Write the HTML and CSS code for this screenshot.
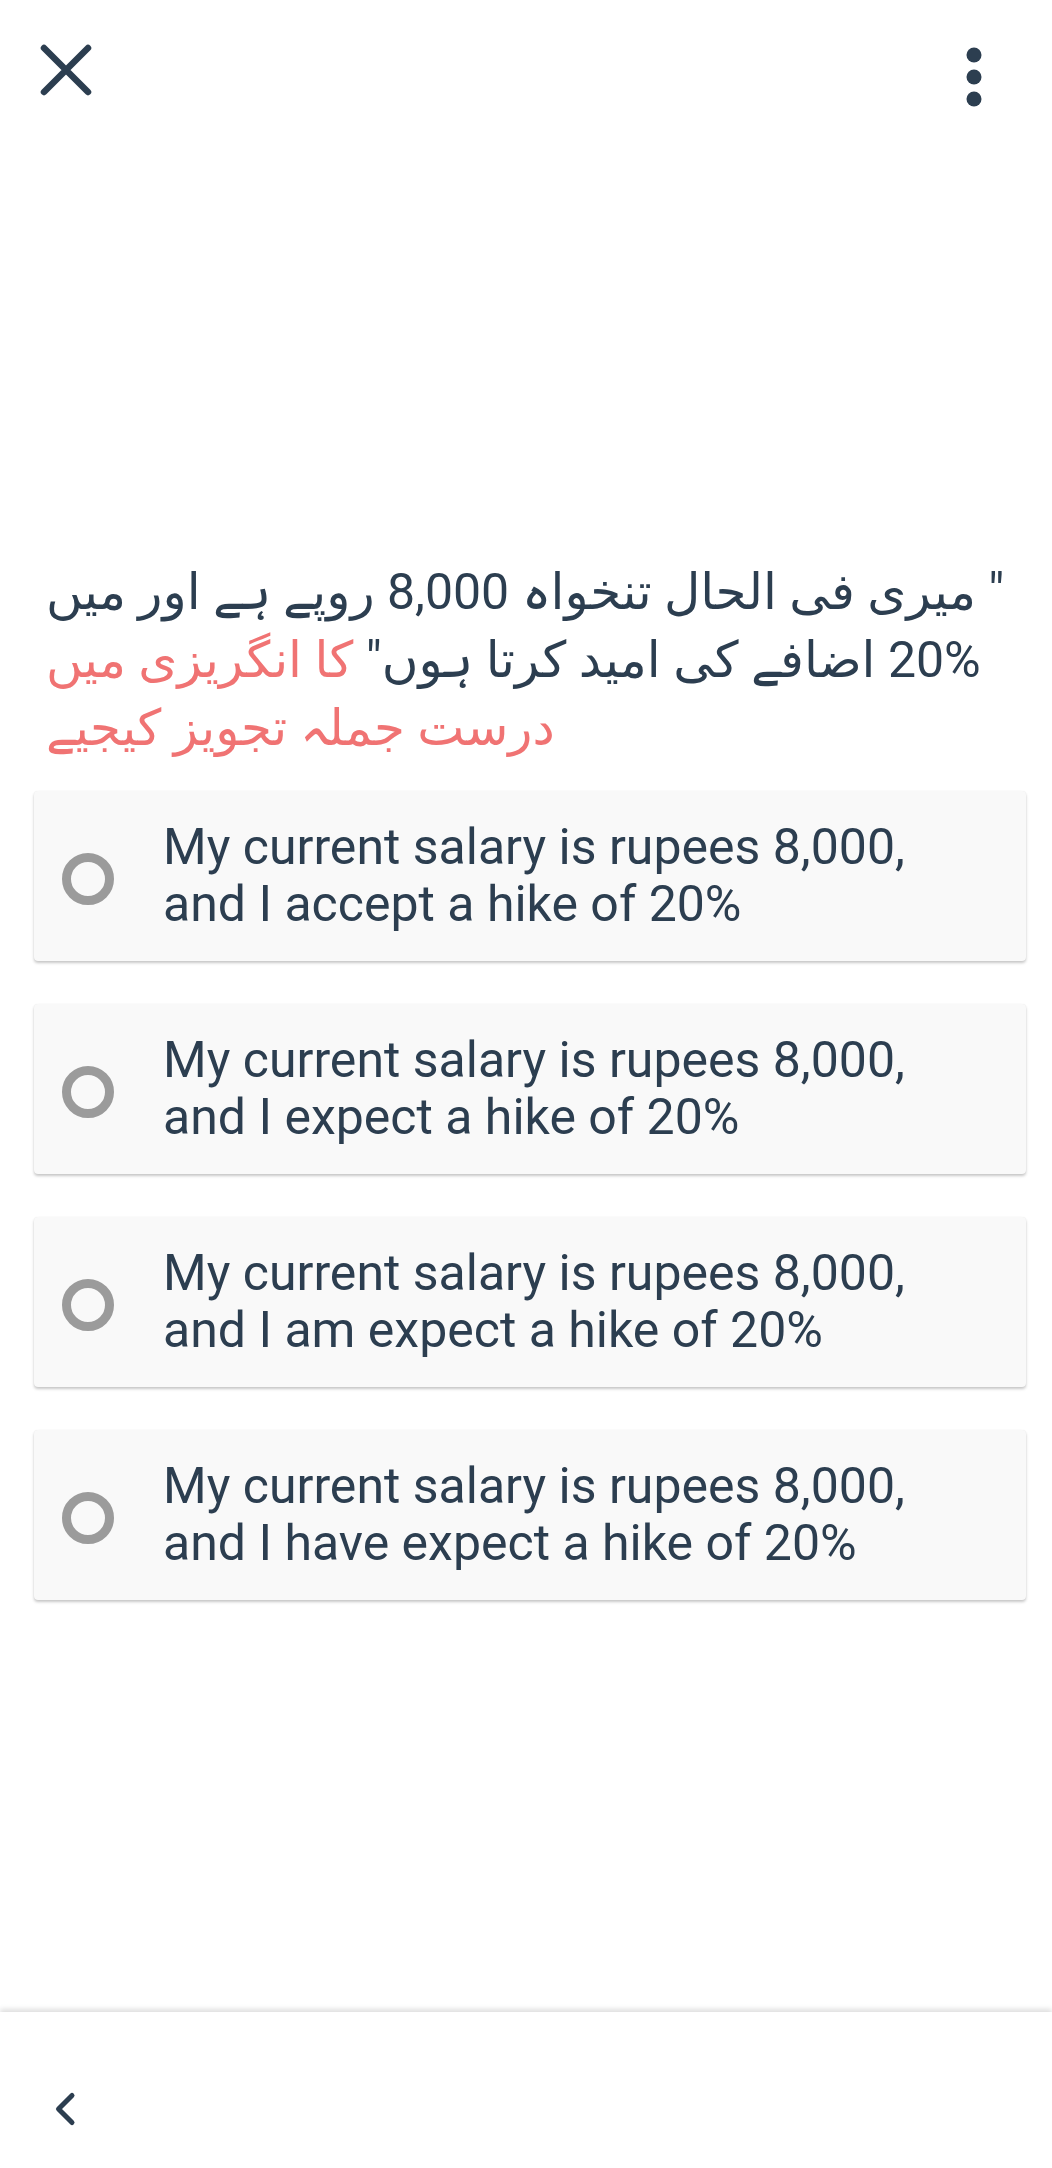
FILE: index.html
```html
<!DOCTYPE html>
<html lang="ur">
<head>
<meta charset="utf-8">
<title>Quiz</title>
<link rel="stylesheet" href="styles.css">
</head>
<body>
<div class="page">
  <header class="topbar">
    <svg class="close-icon" width="52" height="52" viewBox="0 0 52 52" aria-label="close">
      <path d="M4 4 L48 48 M48 4 L4 48" stroke="#2c3e50" stroke-width="6.5" stroke-linecap="round" fill="none"/>
    </svg>
    <svg class="more-icon" width="16" height="60" viewBox="0 0 16 60" aria-label="more">
      <circle cx="8" cy="8" r="7.5" fill="#2c3e50"/>
      <circle cx="8" cy="30" r="7.5" fill="#2c3e50"/>
      <circle cx="8" cy="52" r="7.5" fill="#2c3e50"/>
    </svg>
  </header>

  <div class="question" dir="rtl">
    <div class="qline">" میری فی الحال تنخواہ 8,000 روپے ہے اور میں</div>
    <div class="qline">20% اضافے کی امید کرتا ہوں" <span class="hl">کا انگریزی میں</span></div>
    <div class="qline hl">درست جملہ تجویز کیجیے</div>
  </div>

  <div class="options">
    <div class="option">
      <span class="radio"></span>
      <span class="opt-text">My current salary is rupees 8,000,<br>and I accept a hike of 20%</span>
    </div>
    <div class="option">
      <span class="radio"></span>
      <span class="opt-text">My current salary is rupees 8,000,<br>and I expect a hike of 20%</span>
    </div>
    <div class="option">
      <span class="radio"></span>
      <span class="opt-text">My current salary is rupees 8,000,<br>and I am expect a hike of 20%</span>
    </div>
    <div class="option">
      <span class="radio"></span>
      <span class="opt-text">My current salary is rupees 8,000,<br>and I have expect a hike of 20%</span>
    </div>
  </div>

  <footer class="bottombar">
    <svg class="back-icon" width="26" height="38" viewBox="0 0 26 38" aria-label="back">
      <polyline points="20,5.5 6.5,19 20,32.5" stroke="#2c3e50" stroke-width="5" stroke-linecap="round" stroke-linejoin="round" fill="none"/>
    </svg>
  </footer>
</div>
</body>
</html>
```

FILE: styles.css
```css
html, body {
  margin: 0;
  padding: 0;
  background: #ffffff;
}

body {
  font-family: Roboto, "DejaVu Sans", sans-serif;
  color: #2c3e50;
}

.page {
  width: 1052px;
  min-height: 2168px;
  display: flex;
  flex-direction: column;
}

.topbar {
  display: flex;
  justify-content: space-between;
  align-items: flex-start;
  padding: 44px 70px 0 40px;
  height: 104px;
  box-sizing: border-box;
}

.close-icon {
  display: block;
  margin-top: 0;
}

.more-icon {
  display: block;
  margin-top: 3px;
}

.question {
  margin-top: 454px;
  padding: 0 32px 0 46px;
  text-align: left;
  font-size: 50px;
  line-height: 68px;
  color: #2c3e50;
}

.qline {
  white-space: nowrap;
}

.hl {
  color: #f07373;
}

.options {
  margin-top: 29px;
  display: flex;
  flex-direction: column;
  gap: 43px;
  padding: 0 26px 0 34px;
}

.option {
  display: flex;
  align-items: center;
  background: #f9f9f9;
  border-radius: 4px;
  box-shadow: 0 2px 3px rgba(0, 0, 0, 0.22), 0 0 1px rgba(0, 0, 0, 0.08);
  padding: 28px 20px 28px 28px;
}

.radio {
  flex: none;
  width: 34px;
  height: 34px;
  border: 9px solid #9b9b9b;
  border-radius: 50%;
  margin-top: 6px;
}

.opt-text {
  margin-left: 49px;
  font-size: 50px;
  line-height: 57px;
  color: #2c3e50;
}

.bottombar {
  margin-top: auto;
  height: 156px;
  background: #ffffff;
  box-shadow: 0 -3px 5px rgba(0, 0, 0, 0.13);
  padding: 78px 0 0 52px;
  box-sizing: border-box;
}

.back-icon {
  display: block;
}
```
